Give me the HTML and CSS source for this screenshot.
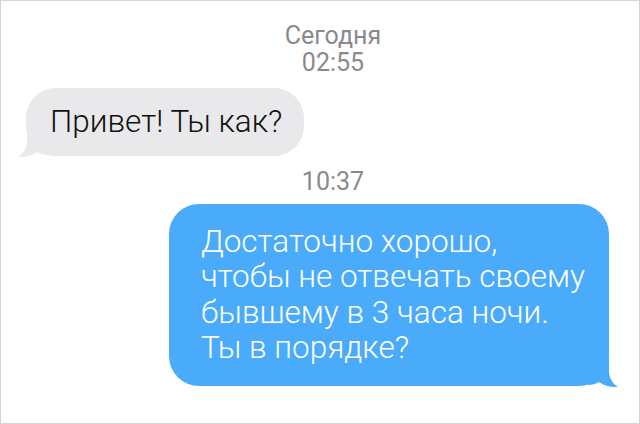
FILE: index.html
```html
<!DOCTYPE html>
<html lang="ru">
<head>
    <meta charset="UTF-8">
    <meta name="viewport" content="width=device-width, initial-scale=1.0">
    <title>Сообщения</title>
    <link rel="stylesheet" href="styles.css">
</head>
<body>
    <div class="chat">
        <div class="stamp">Сегодня<br>02:55</div>
        <div class="row row-in">
            <div class="bubble bubble-in">
                Привет! Ты как?
                <svg class="tail" width="30" height="30" viewBox="0 0 30 30">
                    <path d="M9 0 L9 13 C9 20 5 26 0 29 C7 29.5 14 28 19 24 C22 26 26 27 30 27 L30 0 Z"/>
                </svg>
            </div>
        </div>
        <div class="stamp stamp-mid">10:37</div>
        <div class="row row-out">
            <div class="bubble bubble-out">
                Достаточно хорошо,<br>
                чтобы не отвечать своему<br>
                бывшему в 3 часа ночи.<br>
                Ты в порядке?
                <svg class="tail" width="30" height="30" viewBox="0 0 30 30">
                    <path d="M21 0 L21 13 C21 20 25 26 30 29 C23 29.5 16 28 11 24 C8 26 4 27 0 27 L0 0 Z"/>
                </svg>
            </div>
        </div>
    </div>
</body>
</html>
```

FILE: styles.css
```css
body {
    margin: 0;
    background: #fff;
    font-family: Roboto, "Noto Sans", sans-serif;
}
.chat {
    width: 640px;
    height: 424px;
    box-sizing: border-box;
    border: 1px solid #d4d4d4;
    padding-top: 21px;
    overflow: hidden;
}
.stamp {
    font-size: 25px;
    line-height: 27px;
    color: #8a8a8e;
    text-align: center;
    padding-left: 26px;
}
.stamp-mid {
    margin-top: 12px;
}
.row {
    display: flex;
    margin-top: 12px;
}
.row-in {
    justify-content: flex-start;
    padding-left: 25px;
}
.row-out {
    justify-content: flex-end;
    padding-right: 30px;
    margin-top: 9px;
}
.bubble {
    position: relative;
    font-weight: 300;
    font-size: 31.5px;
    line-height: 35.5px;
    border-radius: 30px;
}
.bubble-in {
    background: #e9e9eb;
    color: #111;
    padding: 16px 22px 16px 24px;
}
.bubble-out {
    background: #4aabfb;
    color: #fff;
    padding: 20px 24px 20px 32px;
}
.tail {
    position: absolute;
    bottom: -2px;
}
.bubble-in .tail {
    left: -8px;
    fill: #e9e9eb;
}
.bubble-out .tail {
    right: -9px;
    fill: #4aabfb;
}
```
